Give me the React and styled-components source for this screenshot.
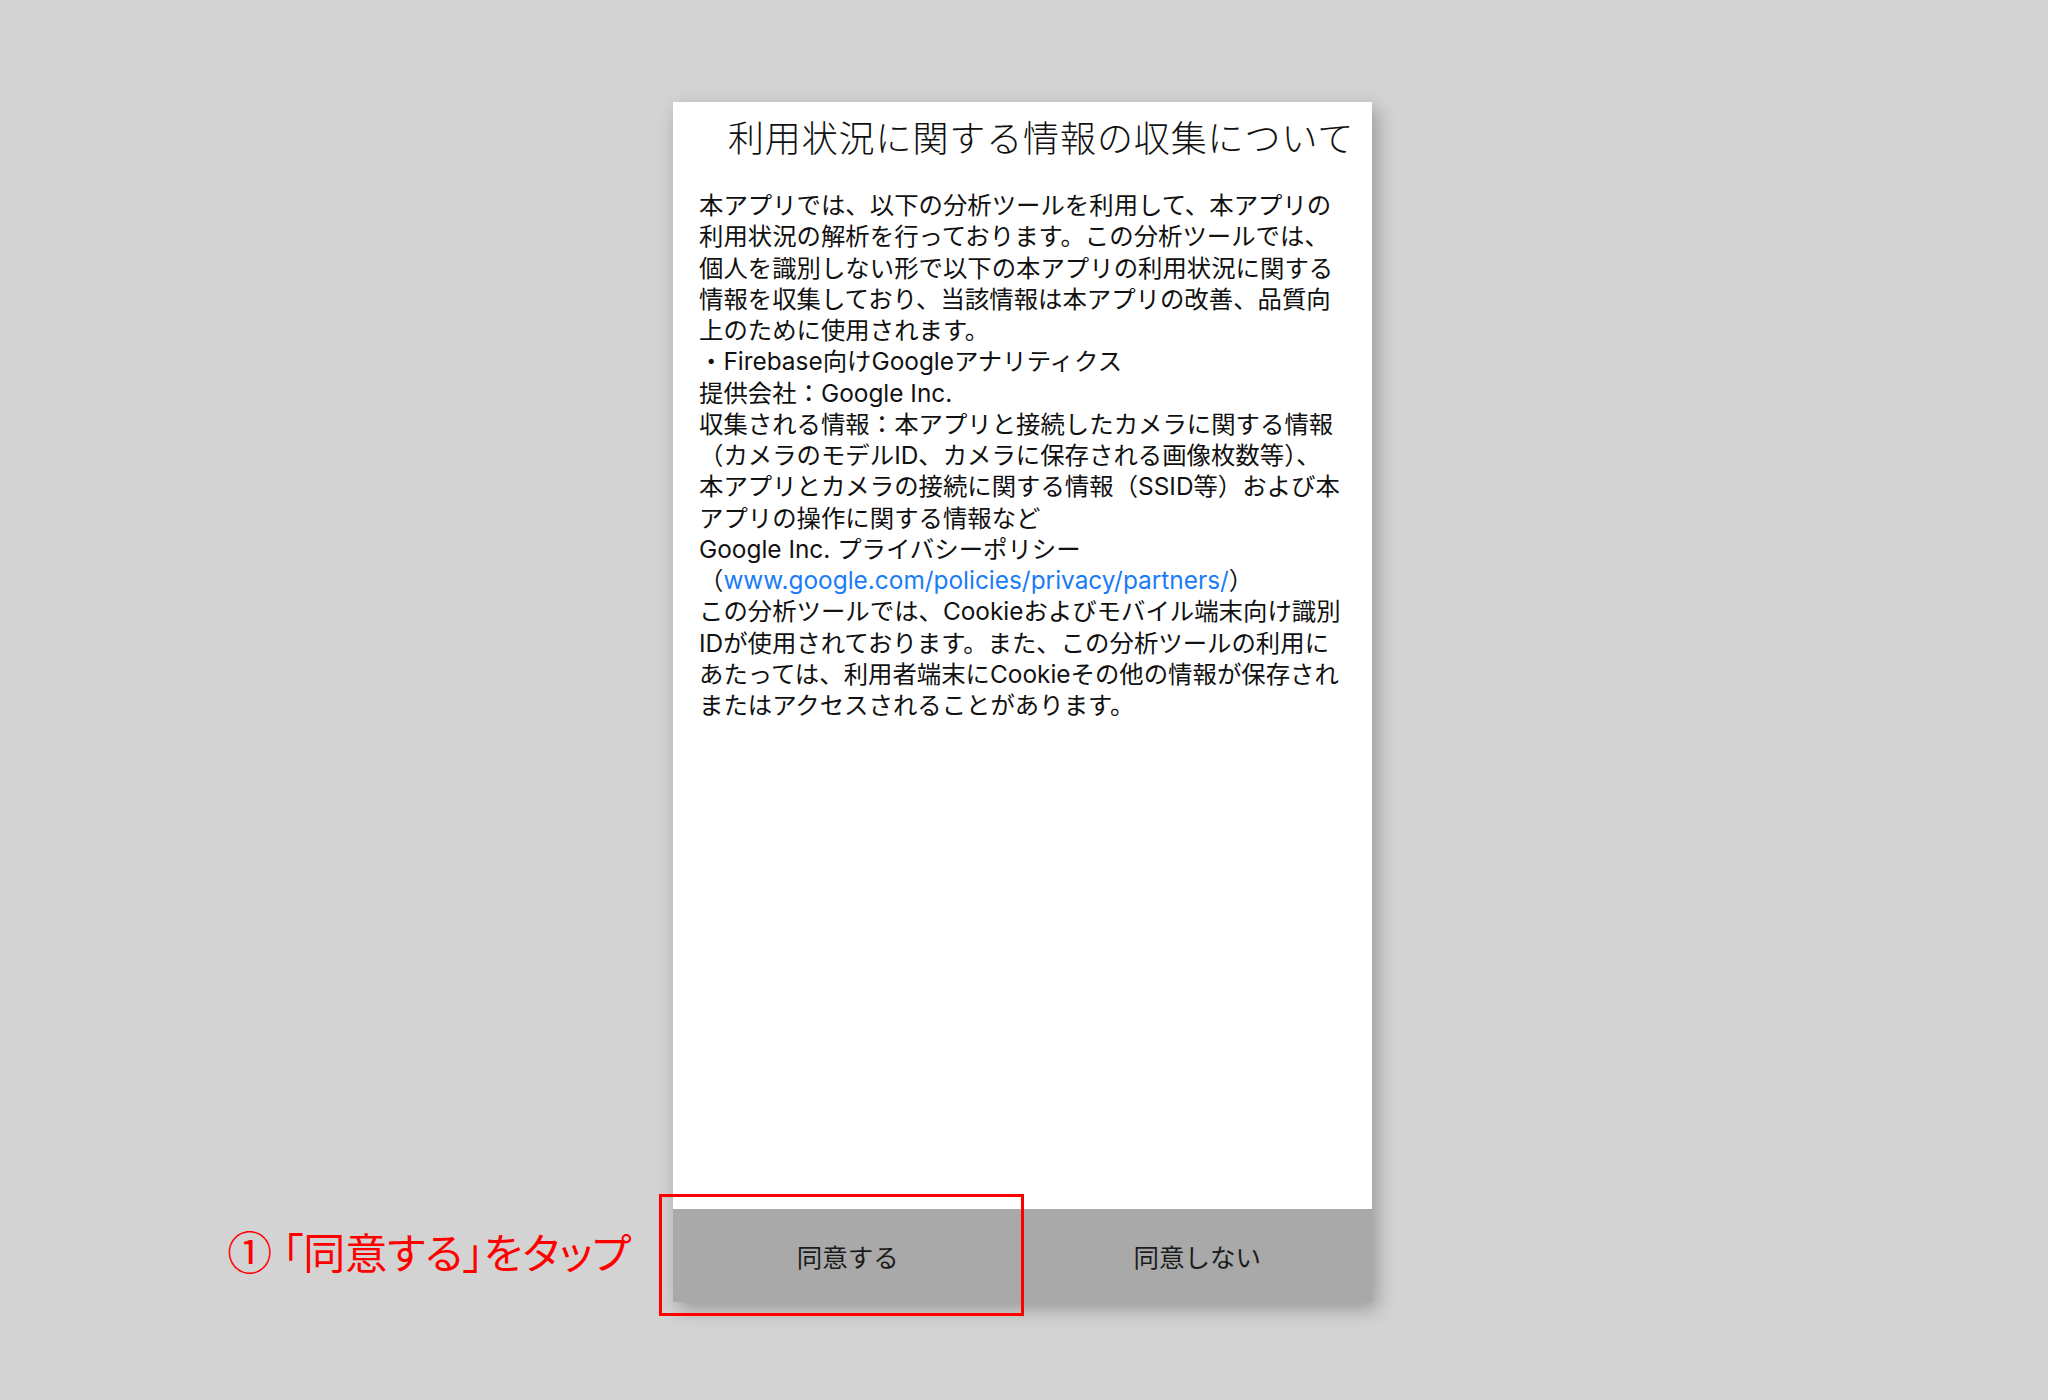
import React from "react";
import styled, { createGlobalStyle } from "styled-components";

const GlobalStyle = createGlobalStyle`
  html, body {
    margin: 0;
    padding: 0;
    background: #d3d3d3;
  }
  body {
    font-family: "Noto Sans CJK JP", "Noto Sans", sans-serif;
  }
`;

const Page = styled.div`
  box-sizing: border-box;
  width: 100%;
  min-height: 1400px;
  padding: 102px 3px 0 0;
  display: flex;
  justify-content: center;
  align-items: flex-start;
  background: #d3d3d3;
`;

const Dialog = styled.section`
  position: relative;
  width: 699px;
  height: 1200px;
  display: flex;
  flex-direction: column;
  background: #ffffff;
  box-shadow: 5px 7px 18px rgba(0, 0, 0, 0.28);
`;

const Title = styled.h1`
  margin: 0;
  padding: 13px 0 0 37px;
  font-family: "Noto Sans CJK JP", sans-serif;
  font-weight: 300;
  font-size: 36px;
  line-height: 42px;
  letter-spacing: 0.9px;
  text-align: center;
  color: #111111;
`;

const Body = styled.div`
  flex: 1;
  padding: 33px 26px 0 26px;
  font-family: Inter, "Noto Sans CJK JP", sans-serif;
  font-weight: 400;
  font-size: 24.4px;
  line-height: 31.25px;
  color: #111111;
`;

const Line = styled.span`
  display: block;
  white-space: nowrap;
`;

const Link = styled.a`
  color: #1a7cf7;
  text-decoration: none;
`;

const ButtonBar = styled.div`
  height: 93px;
  display: grid;
  grid-template-columns: 1fr 1fr;
  background: #a9a9a9;
`;

const ActionButton = styled.button`
  border: none;
  background: transparent;
  padding: 0;
  margin: 0;
  font-family: "Noto Sans CJK JP", sans-serif;
  font-weight: 400;
  font-size: 25.5px;
  color: #1c1c1c;
  cursor: pointer;
`;

const CalloutFrame = styled.div`
  position: absolute;
  left: -14px;
  bottom: -14px;
  width: 365px;
  height: 122px;
  box-sizing: border-box;
  border: 3px solid #ff0000;
  pointer-events: none;
`;

const CalloutLabel = styled.div`
  position: absolute;
  right: calc(100% + 31px);
  top: 33px;
  white-space: nowrap;
  display: flex;
  align-items: center;
  gap: 10px;
  font-family: "Noto Sans CJK JP", sans-serif;
  font-feature-settings: "palt";
  font-weight: 400;
  font-size: 42px;
  line-height: 42px;
  color: #ff0000;
`;

const Circled = styled.span`
  font-size: 45px;
`;

const lines1 = [
  "本アプリでは、以下の分析ツールを利用して、本アプリの",
  "利用状況の解析を行っております。この分析ツールでは、",
  "個人を識別しない形で以下の本アプリの利用状況に関する",
  "情報を収集しており、当該情報は本アプリの改善、品質向",
  "上のために使用されます。",
  "・Firebase向けGoogleアナリティクス",
  "提供会社：Google Inc.",
  "収集される情報：本アプリと接続したカメラに関する情報",
  "（カメラのモデルID、カメラに保存される画像枚数等）、",
  "本アプリとカメラの接続に関する情報（SSID等）および本",
  "アプリの操作に関する情報など",
  "Google Inc. プライバシーポリシー",
];

const lines2 = [
  "この分析ツールでは、Cookieおよびモバイル端末向け識別",
  "IDが使用されております。また、この分析ツールの利用に",
  "あたっては、利用者端末にCookieその他の情報が保存され",
  "またはアクセスされることがあります。",
];

export default function App() {
  return (
    <>
      <GlobalStyle />
      <Page>
        <Dialog>
          <Title>利用状況に関する情報の収集について</Title>
          <Body>
            {lines1.map((t) => (
              <Line key={t}>{t}</Line>
            ))}
            <Line>
              （<Link href="#">www.google.com/policies/privacy/partners/</Link>）
            </Line>
            {lines2.map((t) => (
              <Line key={t}>{t}</Line>
            ))}
          </Body>
          <ButtonBar>
            <ActionButton>同意する</ActionButton>
            <ActionButton>同意しない</ActionButton>
          </ButtonBar>
          <CalloutFrame>
            <CalloutLabel>
              <Circled>①</Circled>
              <span>「同意する」をタップ</span>
            </CalloutLabel>
          </CalloutFrame>
        </Dialog>
      </Page>
    </>
  );
}
